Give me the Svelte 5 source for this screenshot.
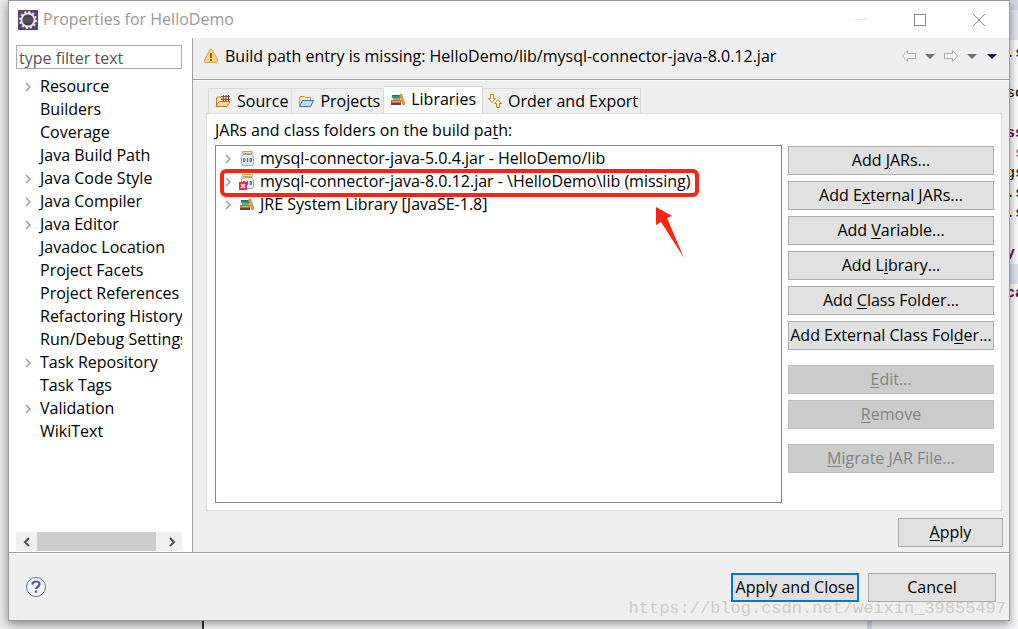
<script lang="ts">
  type Label = [string, string, string];

  interface TreeItem {
    name: string;
    expandable?: boolean;
  }

  interface Action {
    label: Label;
    disabled?: boolean;
  }

  const categories: TreeItem[] = [
    { name: 'Resource', expandable: true },
    { name: 'Builders' },
    { name: 'Coverage' },
    { name: 'Java Build Path' },
    { name: 'Java Code Style', expandable: true },
    { name: 'Java Compiler', expandable: true },
    { name: 'Java Editor', expandable: true },
    { name: 'Javadoc Location' },
    { name: 'Project Facets' },
    { name: 'Project References' },
    { name: 'Refactoring History' },
    { name: 'Run/Debug Settings' },
    { name: 'Task Repository', expandable: true },
    { name: 'Task Tags' },
    { name: 'Validation', expandable: true },
    { name: 'WikiText' },
  ];

  const tabs = [
    { id: 'source', name: 'Source' },
    { id: 'projects', name: 'Projects' },
    { id: 'libraries', name: 'Libraries' },
    { id: 'order', name: 'Order and Export' },
  ];

  const entries = [
    { icon: 'jar', name: 'mysql-connector-java-5.0.4.jar - HelloDemo/lib' },
    { icon: 'missing', name: 'mysql-connector-java-8.0.12.jar - \\HelloDemo\\lib (missing)' },
    { icon: 'libraries', name: 'JRE System Library [JavaSE-1.8]' },
  ];

  const actionGroups: Action[][] = [
    [
      { label: ['Add ', 'J', 'ARs...'] },
      { label: ['Add E', 'x', 'ternal JARs...'] },
      { label: ['Add ', 'V', 'ariable...'] },
      { label: ['Add L', 'i', 'brary...'] },
      { label: ['Add ', 'C', 'lass Folder...'] },
      { label: ['Add External Class Fol', 'd', 'er...'] },
    ],
    [
      { label: ['', 'E', 'dit...'], disabled: true },
      { label: ['', 'R', 'emove'], disabled: true },
    ],
    [{ label: ['', 'M', 'igrate JAR File...'], disabled: true }],
  ];

  // Slivers of the editor that show beside the dialog
  const editorLines = [
    { text: '.s', kind: 'plain' },
    { text: '', kind: 'plain' },
    { text: 'so', kind: 'plain' },
    { text: '', kind: 'plain' },
    { text: 'ss', kind: 'keyword' },
    { text: ' s', kind: 'error' },
    { text: 'gs', kind: 'plain' },
    { text: '.s', kind: 'plain' },
    { text: '.s', kind: 'plain' },
    { text: '', kind: 'plain' },
    { text: 'y', kind: 'keyword' },
    { text: '', kind: 'current' },
    { text: 'ca', kind: 'keyword' },
  ];

  let filter = $state('');
  let activeTab = $state('libraries');
</script>

{#snippet chevron()}
  <svg class="chevron" width="8" height="10" viewBox="0 0 8 10" aria-hidden="true">
    <path d="M2 1l4 4-4 4" fill="none" stroke="#a0a0a0" stroke-width="1.5" />
  </svg>
{/snippet}

{#snippet mnemonic(label: Label)}
  {label[0]}<u>{label[1]}</u>{label[2]}
{/snippet}

{#snippet icon(name: string)}
  <svg class="icon" width="16" height="16" viewBox="0 0 16 16" aria-hidden="true">
    {#if name === 'source'}
      <path d="M1.5 12.500V5l1-1h3l1 1.500h5V8" fill="#fdebb8" stroke="#b07f35" />
      <path d="M1 13.500L4 8.500h11l-3 5z" fill="#fbd88d" stroke="#b07f35" stroke-linejoin="round" />
      <path d="M7 3h7v5H7z" fill="#e9cda6" />
      <path d="M6 3.500h9M6 6.500h9M8.500 2v6.500M11 2v6.500M13.500 2v6.500" stroke="#6f4a3c" stroke-width=".9" />
    {:else if name === 'projects'}
      <path d="M1.500 12.500V4.500l1-1h4l1 1h5v3" fill="#fff0c2" stroke="#c79a4b" />
      <path d="M1.500 13.500L4.500 7.500h11l-3 6z" fill="#c5dcfa" stroke="#4a6fb4" stroke-linejoin="round" />
    {:else if name === 'libraries'}
      <path d="M2 3h8v3H2z" fill="#26957c" />
      <path d="M2 3h8v1H2z" fill="#167360" />
      <path d="M3 6h7v2H3z" fill="#5fb598" />
      <path d="M1 8h10v3H1z" fill="#c6713c" />
      <path d="M2 9h8v1H2z" fill="#e7a46c" />
      <path d="M1 11h10v2H1z" fill="#6f4630" />
      <path d="M9.500 3l2-1 3.500 10-2 1z" fill="#f3a63c" stroke="#b5652a" stroke-width=".7" />
    {:else if name === 'order'}
      <path d="M3.500 1.500h3v4h2l-3.500 4-3.500-4h2z" fill="#fff6d5" stroke="#b88b2c" />
      <path d="M9.500 14.500h3v-4h2L11 6.500l-3.500 4h2z" fill="#fff6d5" stroke="#b88b2c" />
    {:else}
      <path d="M4 3.500L2.500 5.500v7q0 2 2 2h8q2 0 2-2v-7L13 3.500z" fill="#e5eff9" stroke="#93a6bd" />
      <path d="M3.500.5h10v2h-10z" fill="#f8e0a0" stroke="#cfa64c" />
      <path d="M4.500 7.500h1.500v3H4.500zM11 7.500h1.500v3H11zM8.500 7v4" fill="none" stroke="#586b88" />
      {#if name === 'missing'}
        <path d="M0 8h8v8H0z" fill="#d92e43" />
        <path d="M2 10l4 4M6 10l-4 4" stroke="#fff" stroke-width="1.500" />
      {/if}
    {/if}
  </svg>
{/snippet}

<div class="desktop">
  <div class="editor" aria-hidden="true">
    {#each editorLines as line}
      <div class="line {line.kind}">{line.text}</div>
    {/each}
  </div>
  <div class="editor-bottom" aria-hidden="true"></div>

  <main class="dialog">
    <header class="titlebar">
      <svg width="20" height="20" viewBox="0 0 20 20" aria-hidden="true">
        <path d="M0 0h20v20H0z" fill="#514174" />
        <circle cx="10" cy="10" r="8" fill="none" stroke="#e9e5dd" stroke-width="2" stroke-dasharray="2.200 1.990" />
        <circle cx="10" cy="10" r="6.500" fill="#443b50" stroke="#e9e5dd" stroke-width="2" />
        <path d="M4.500 8h11M4 10h12M4.500 12h11" stroke="#78718a" stroke-width=".6" />
      </svg>
      <h1>Properties for HelloDemo</h1>
      <div class="window-controls">
        <button aria-label="Minimize">
          <svg width="14" height="14" viewBox="0 0 14 14"><path d="M1 6.500h12" stroke="#e2e2e2" /></svg>
        </button>
        <button aria-label="Maximize">
          <svg width="14" height="14" viewBox="0 0 14 14"><path d="M1.500 1.500h11v11h-11z" fill="none" stroke="#888" /></svg>
        </button>
        <button aria-label="Close">
          <svg width="14" height="14" viewBox="0 0 14 14"><path d="M1 1l12 12M13 1L1 13" stroke="#888" /></svg>
        </button>
      </div>
    </header>

    <div class="body">
      <aside class="sidebar">
        <input type="text" aria-label="Filter" placeholder="type filter text" bind:value={filter} />
        <ul class="tree">
          {#each categories as item}
            <li>
              <span class="toggle">{#if item.expandable}{@render chevron()}{/if}</span>
              <span>{item.name}</span>
            </li>
          {/each}
        </ul>
        <div class="scrollbar">
          <button aria-label="Scroll left">
            <svg width="10" height="10" viewBox="0 0 10 10"><path d="M7 1L3 5l4 4" fill="none" stroke="#505050" stroke-width="2" /></svg>
          </button>
          <div class="thumb"></div>
          <button aria-label="Scroll right">
            <svg width="10" height="10" viewBox="0 0 10 10"><path d="M3 1l4 4-4 4" fill="none" stroke="#505050" stroke-width="2" /></svg>
          </button>
        </div>
      </aside>

      <section class="page">
        <div class="message">
          <svg width="16" height="16" viewBox="0 0 16 16" aria-hidden="true">
            <path d="M7 1.500q1-1 2 0l5.500 10.500q.5 2.500-1.500 2.500H3q-2 0-1.500-2.500z" fill="#fbd77e" stroke="#dfa24a" />
            <path d="M8 5v5M8 11v2" stroke="#6f4a1e" stroke-width="1.600" />
          </svg>
          <p>Build path entry is missing: HelloDemo/lib/mysql-connector-java-8.0.12.jar</p>
          <div class="history">
            <button aria-label="Back">
              <svg width="16" height="14" viewBox="0 0 16 14"><path d="M1.500 7l5-5.500v3h8v5h-8v3z" fill="#f7f7f7" stroke="#aaa" /></svg>
            </button>
            <button aria-label="Back history">
              <svg width="10" height="14" viewBox="0 0 10 14"><path d="M0 5h10L5 10z" fill="#707070" /></svg>
            </button>
            <button aria-label="Forward">
              <svg width="16" height="14" viewBox="0 0 16 14"><path d="M14.500 7l-5-5.500v3h-8v5h8v3z" fill="#f7f7f7" stroke="#aaa" /></svg>
            </button>
            <button aria-label="Forward history">
              <svg width="10" height="14" viewBox="0 0 10 14"><path d="M0 5h10L5 10z" fill="#707070" /></svg>
            </button>
            <button aria-label="Menu">
              <svg width="10" height="14" viewBox="0 0 10 14"><path d="M0 5h10L5 10z" fill="#25133f" /></svg>
            </button>
          </div>
        </div>

        <div class="content">
          <div class="tabs" role="tablist">
            {#each tabs as tab}
              <button
                role="tab"
                class:active={activeTab === tab.id}
                aria-selected={activeTab === tab.id}
                onclick={() => (activeTab = tab.id)}
              >
                {@render icon(tab.id)}
                {tab.name}
              </button>
            {/each}
          </div>

          <div class="panel">
            <p class="caption">JARs and class folders on the build pa<u>t</u>h:</p>
            <div class="columns">
              <ul class="entries">
                {#each entries as entry}
                  <li class:marked={entry.icon === 'missing'}>
                    <span class="toggle">{@render chevron()}</span>
                    {@render icon(entry.icon)}
                    <span class="entry-name">{entry.name}</span>
                  </li>
                {/each}
              </ul>
              <div class="actions">
                {#each actionGroups as group}
                  <div class="group">
                    {#each group as action}
                      <button class="push" disabled={action.disabled}>
                        <span>{@render mnemonic(action.label)}</span>
                      </button>
                    {/each}
                  </div>
                {/each}
              </div>
            </div>
          </div>

          <div class="apply-row">
            <button class="push"><span><u>A</u>pply</span></button>
          </div>
        </div>
      </section>
    </div>

    <footer>
      <button class="help" aria-label="Help">
        <svg width="22" height="22" viewBox="0 0 22 22">
          <circle cx="11" cy="11" r="9.500" fill="#f4f4f6" stroke="#66779b" />
          <path d="M7.500 8.500q0-3 3.500-3t3.500 2.500q0 1.500-1.500 2.500t-2 2.500" fill="none" stroke="#4e618e" stroke-width="2.200" />
          <path d="M9.800 14.500h2.400v2.300H9.800z" fill="#4e618e" />
        </svg>
      </button>
      <button class="push default">Apply and Close</button>
      <button class="push">Cancel</button>
    </footer>
  </main>

  <div class="watermark">https://blog.csdn.net/weixin_39855497</div>
</div>

<style>
  :global(body) {
    background: #ececec;
  }

  .desktop,
  .desktop *,
  .desktop *::before,
  .desktop *::after {
    box-sizing: border-box;
  }

  .desktop {
    position: relative;
    display: flex;
    min-height: 100vh;
    padding: 0 8px 8px;
    overflow: hidden;
    font-family: 'Open Sans', sans-serif;
    font-size: 16px;
    line-height: 23px;
    color: #000;
  }

  h1,
  p,
  ul {
    margin: 0;
    padding: 0;
    list-style: none;
  }

  button {
    padding: 0;
    border: 0;
    background: none;
    font: inherit;
    color: inherit;
  }

  svg {
    display: block;
    flex: none;
  }

  u {
    text-underline-offset: 2px;
  }

  .editor {
    position: absolute;
    top: 0;
    right: 0;
    bottom: 0;
    width: 12px;
    padding-top: 44px;
    background: linear-gradient(#d5daea 10px, #e6e8f3 10px, #e6e8f3 40px, #fff 40px);
    font: 15px/20px 'Liberation Mono', monospace;
    white-space: pre;
  }

  .line {
    height: 20px;
  }

  .keyword {
    font-weight: bold;
    color: #7f0055;
  }

  .error {
    color: #b5483c;
  }

  .current {
    background: #dfe8f6;
  }

  .editor-bottom {
    position: absolute;
    right: 0;
    bottom: 0;
    left: 202px;
    height: 10px;
    border-left: 2px solid #333;
    background: linear-gradient(to left, #f8f8fa 146px, #d9dcee 146px, #d9dcee 151px, #fff 151px);
  }

  .dialog {
    position: relative;
    flex: 1;
    min-width: 0;
    display: flex;
    flex-direction: column;
    border: 1px solid #9b9b9f;
    background: #efefef;
    box-shadow: 0 3px 10px rgba(0, 0, 0, 0.45);
  }

  .titlebar {
    display: flex;
    align-items: center;
    gap: 5px;
    height: 37px;
    padding: 0 16px 0 9px;
    background: #fff;
  }

  h1 {
    font-size: 16px;
    font-weight: normal;
    color: #999;
  }

  .window-controls {
    display: flex;
    gap: 45px;
    margin-left: auto;
    padding-right: 7px;
  }

  .body {
    flex: 1;
    display: flex;
    min-height: 0;
  }

  .sidebar {
    flex: none;
    display: flex;
    flex-direction: column;
    width: 184px;
    padding: 7px 10px 1px 7px;
    border-right: 1px solid #a0a0a0;
    background: #fff;
  }

  .sidebar input {
    width: 100%;
    height: 24px;
    padding: 1px 2px 0;
    border: 1px solid #abadb3;
    background: #fff;
    font: inherit;
  }

  .sidebar input::placeholder {
    color: #555;
    opacity: 1;
  }

  .tree {
    flex: 1;
    padding-top: 6px;
    overflow: hidden;
  }

  .tree li {
    display: flex;
    height: 23px;
    white-space: nowrap;
  }

  .toggle {
    flex: none;
    display: flex;
    align-items: center;
    justify-content: center;
    width: 24px;
  }

  .scrollbar {
    display: flex;
    height: 19px;
    background: #f0f0f0;
  }

  .scrollbar button {
    display: grid;
    place-items: center;
    width: 21px;
  }

  .thumb {
    width: 119px;
    margin-right: 5px;
    background: #cdcdcd;
  }

  .page {
    flex: 1;
    min-width: 0;
    display: flex;
    flex-direction: column;
  }

  .message {
    display: flex;
    align-items: center;
    gap: 6px;
    height: 42px;
    padding: 0 12px 5px 10px;
    border-bottom: 1px solid #a0a0a0;
    box-shadow: 0 1px #fff;
  }

  .history {
    display: flex;
    gap: 8px;
    margin-left: auto;
  }

  .history button:last-child {
    margin-left: 2px;
  }

  .content {
    flex: 1;
    display: flex;
    flex-direction: column;
    padding: 6px 6px 5px 13px;
  }

  .tabs {
    display: flex;
    align-items: flex-end;
    padding: 0 2px;
  }

  .tabs button {
    display: flex;
    align-items: center;
    gap: 6px;
    height: 25px;
    padding: 0 3px 0 6px;
    border: 1px solid #d9d9d9;
    border-width: 1px 1px 0 0;
    white-space: nowrap;
  }

  .tabs button:first-child {
    border-left-width: 1px;
  }

  .tabs button:last-child {
    gap: 5px;
    padding: 0 2px 0 4px;
  }

  .tabs .active {
    gap: 5px;
    height: 28px;
    margin-bottom: -1px;
    padding: 0 6px 2px;
    background: #fff;
  }

  .panel {
    flex: 1;
    display: flex;
    flex-direction: column;
    margin-right: 1px;
    padding: 5px 7px 7px 8px;
    border: 1px solid #dcdcdc;
    background: #fff;
  }

  .caption {
    padding-bottom: 3px;
  }

  .columns {
    flex: 1;
    display: flex;
    gap: 6px;
  }

  .entries {
    flex: 1;
    min-width: 0;
    padding-top: 1px;
    border: 1px solid #828790;
  }

  .entries li {
    position: relative;
    display: flex;
    align-items: center;
    height: 23px;
    white-space: nowrap;
  }

  .entries .icon {
    margin-left: -1px;
  }

  .entry-name {
    margin-left: 5px;
  }

  /* Hand-drawn highlight over the broken entry */
  .marked::before {
    content: '';
    position: absolute;
    top: -1px;
    left: 4px;
    width: 479px;
    height: 28px;
    border: 4px solid #fb2412;
    border-radius: 6px;
  }

  .marked::after {
    content: '';
    position: absolute;
    top: 37px;
    left: 440px;
    width: 28px;
    height: 51px;
    background: #fb2412;
    clip-path: polygon(0 0, 16px 9px, 11px 11px, 28px 51px, 5px 15px, 0 18px);
  }

  .actions {
    display: flex;
    flex-direction: column;
    gap: 15px;
    width: 206px;
    padding-top: 1px;
  }

  .group {
    display: flex;
    flex-direction: column;
    gap: 6px;
  }

  .push {
    height: 29px;
    padding: 0;
    border: 1px solid #adadad;
    background: #e1e1e1;
    line-height: 25px;
    white-space: nowrap;
  }

  .push:disabled {
    border-color: #bfbfbf;
    background: #ccc;
    color: #838383;
  }

  .apply-row {
    display: flex;
    justify-content: flex-end;
    padding-top: 7px;
  }

  .apply-row .push {
    width: 105px;
  }

  footer {
    display: flex;
    align-items: center;
    gap: 9px;
    height: 68px;
    padding: 1px 13px 0 16px;
    border-top: 1px solid #a0a0a0;
    box-shadow: inset 0 1px #fff;
  }

  .help {
    margin-right: auto;
  }

  footer .push {
    width: 128px;
  }

  footer .default {
    border: 2px solid #0078d7;
  }

  .watermark {
    position: absolute;
    right: 12px;
    bottom: 8px;
    font: 17px/24px 'Liberation Mono', monospace;
    color: rgba(150, 150, 140, 0.4);
    pointer-events: none;
  }
</style>
